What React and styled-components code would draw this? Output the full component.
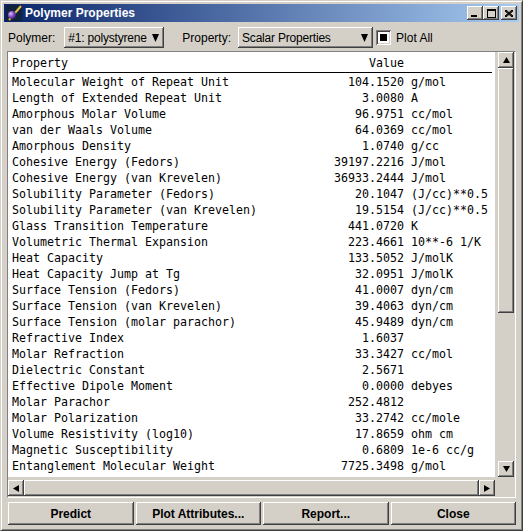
import React from "react";
import styled, { createGlobalStyle, css } from "styled-components";

const GlobalStyle = createGlobalStyle`
  html, body {
    margin: 0;
    padding: 0;
    background: #d4d0c8;
  }
  body {
    font-family: "Liberation Sans", Arial, sans-serif;
  }
`;

const raised = css`
  background: #d4d0c8;
  box-shadow: inset -1px -1px #404040, inset 1px 1px #ffffff,
    inset -2px -2px #808080, inset 2px 2px #d4d0c8;
`;

const sunken = css`
  box-shadow: inset 1px 1px #808080, inset -1px -1px #ffffff,
    inset 2px 2px #404040, inset -2px -2px #d4d0c8;
`;

const ROWS = [
  ["Molecular Weight of Repeat Unit", "104.1520", "g/mol"],
  ["Length of Extended Repeat Unit", "3.0080", "A"],
  ["Amorphous Molar Volume", "96.9751", "cc/mol"],
  ["van der Waals Volume", "64.0369", "cc/mol"],
  ["Amorphous Density", "1.0740", "g/cc"],
  ["Cohesive Energy (Fedors)", "39197.2216", "J/mol"],
  ["Cohesive Energy (van Krevelen)", "36933.2444", "J/mol"],
  ["Solubility Parameter (Fedors)", "20.1047", "(J/cc)**0.5"],
  ["Solubility Parameter (van Krevelen)", "19.5154", "(J/cc)**0.5"],
  ["Glass Transition Temperature", "441.0720", "K"],
  ["Volumetric Thermal Expansion", "223.4661", "10**-6 1/K"],
  ["Heat Capacity", "133.5052", "J/molK"],
  ["Heat Capacity Jump at Tg", "32.0951", "J/molK"],
  ["Surface Tension (Fedors)", "41.0007", "dyn/cm"],
  ["Surface Tension (van Krevelen)", "39.4063", "dyn/cm"],
  ["Surface Tension (molar parachor)", "45.9489", "dyn/cm"],
  ["Refractive Index", "1.6037", ""],
  ["Molar Refraction", "33.3427", "cc/mol"],
  ["Dielectric Constant", "2.5671", ""],
  ["Effective Dipole Moment", "0.0000", "debyes"],
  ["Molar Parachor", "252.4812", ""],
  ["Molar Polarization", "33.2742", "cc/mole"],
  ["Volume Resistivity (log10)", "17.8659", "ohm cm"],
  ["Magnetic Susceptibility", "0.6809", "1e-6 cc/g"],
  ["Entanglement Molecular Weight", "7725.3498", "g/mol"]
];

const Window = styled.div`
  width: 523px;
  height: 531px;
  box-sizing: border-box;
  border: 1px solid;
  border-color: #d4d0c8 #404040 #404040 #d4d0c8;
  box-shadow: inset 1px 1px #ffffff, inset -1px -1px #808080;
  padding: 3px;
  display: flex;
  flex-direction: column;
  background: #d4d0c8;
`;

const TitleBar = styled.div`
  height: 18px;
  flex: none;
  display: flex;
  align-items: center;
  padding: 0 2px;
  background: linear-gradient(to right, #0a246a, #a6caf0);
`;

const TitleText = styled.span`
  flex: 1;
  margin-left: 3px;
  color: #ffffff;
  font-weight: bold;
  font-size: 12px;
`;

const TitleButton = styled.div`
  ${raised};
  width: 16px;
  height: 14px;
  margin-left: ${(p) => (p.$gap ? 2 : 0)}px;
  display: flex;
  align-items: center;
  justify-content: center;
`;

const Content = styled.div`
  flex: 1;
  display: flex;
  flex-direction: column;
  padding: 5px 3px 2px 3px;
  min-height: 0;
`;

const Toolbar = styled.div`
  height: 21px;
  flex: none;
  display: flex;
  align-items: center;
  padding-left: 1px;
  margin-bottom: 3px;
  font-size: 12px;
  color: #000;
`;

const Label = styled.span`
  margin-left: ${(p) => p.$before || 0}px;
  margin-right: ${(p) => p.$after || 0}px;
  white-space: nowrap;
`;

const Combo = styled.div`
  ${raised};
  width: ${(p) => p.$w}px;
  height: 21px;
  box-sizing: border-box;
  display: flex;
  align-items: center;
  justify-content: space-between;
  padding: 0 5px 0 4px;
  white-space: nowrap;
  letter-spacing: -0.2px;
`;

const Check = styled.div`
  ${sunken};
  width: 15px;
  height: 15px;
  box-sizing: border-box;
  margin: 0 5px 0 3px;
  background: #ffffff;
  display: flex;
  align-items: center;
  justify-content: center;

  &::after {
    content: "";
    width: 7px;
    height: 7px;
    background: #000;
  }
`;

const Pane = styled.div`
  flex: 1;
  min-height: 0;
  box-sizing: border-box;
  border-top: 1px solid #808080;
  border-left: 1px solid #808080;
  border-right: 1px solid #ffffff;
  border-bottom: 1px solid #ffffff;
  padding: 0 1px 1px 0;
  display: grid;
  grid-template-columns: 1fr 16px;
  grid-template-rows: 1fr 16px;
  gap: 3px;
`;

const Viewport = styled.div`
  background: #ffffff;
  overflow: hidden;
  padding-top: 3px;
  font-family: "DejaVu Sans Mono", "Liberation Mono", monospace;
  font-size: 11.63px;
  color: #000;
`;

const HeaderRow = styled.div`
  display: flex;
  height: 17px;
  line-height: 17px;
  margin: 0 3px 0 2px;
  padding-left: 2px;
  border-bottom: 1px solid #000;
  white-space: pre;
`;

const Rows = styled.div`
  margin-top: 1px;
`;

const Row = styled.div`
  display: flex;
  height: 16px;
  line-height: 16px;
  padding-left: 4px;
  white-space: pre;
`;

const NameCell = styled.span`
  width: 300px;
  flex: none;
`;

const ValueCell = styled.span`
  width: 92px;
  flex: none;
  text-align: right;
`;

const UnitCell = styled.span`
  padding-left: 7px;
`;

const VScroll = styled.div`
  display: flex;
  flex-direction: column;
  background: #d4d0c8;
`;

const HScroll = styled.div`
  display: flex;
  background: #d4d0c8;
`;

const ScrollButton = styled.div`
  ${raised};
  width: 16px;
  height: 16px;
  flex: none;
  display: flex;
  align-items: center;
  justify-content: center;
`;

const Thumb = styled.div`
  ${raised};
  flex: ${(p) => (p.$size ? "none" : 1)};
  height: ${(p) => (p.$size ? `${p.$size}px` : "auto")};
`;

const Track = styled.div`
  flex: 1;
`;

const ButtonRow = styled.div`
  flex: none;
  height: 23px;
  margin-top: 4px;
  padding-left: 1px;
  display: grid;
  grid-template-columns: repeat(4, 1fr);
  gap: 2px;
`;

const ActionButton = styled.button`
  ${raised};
  border: none;
  padding: 0;
  font-family: "Liberation Sans", Arial, sans-serif;
  font-weight: bold;
  font-size: 12px;
  color: #000;
`;

const Arrow = ({ dir, w = 7, h = 7 }) => {
  const pts = {
    down: `0,0 ${w},0 ${w / 2},${h}`,
    up: `0,${h} ${w},${h} ${w / 2},0`,
    left: `${w},0 ${w},${h} 0,${h / 2}`,
    right: `0,0 0,${h} ${w},${h / 2}`
  }[dir];
  return (
    <svg width={w} height={h} viewBox={`0 0 ${w} ${h}`}>
      <polygon points={pts} fill="#000" />
    </svg>
  );
};

const AppIcon = () => (
  <svg width="16" height="16" viewBox="0 0 16 16">
    <defs>
      <radialGradient id="ball" cx="0.35" cy="0.35" r="0.7">
        <stop offset="0" stopColor="#e0c8ff" />
        <stop offset="0.45" stopColor="#8a5cd0" />
        <stop offset="1" stopColor="#3a1870" />
      </radialGradient>
    </defs>
    <rect width="16" height="16" fill="#10233c" />
    <line x1="3" y1="15" x2="15" y2="1" stroke="#e8c040" strokeWidth="2" />
    <circle cx="6" cy="10" r="4" fill="url(#ball)" />
  </svg>
);

const MinIcon = () => (
  <svg width="8" height="7" viewBox="0 0 8 7">
    <rect x="0" y="5" width="6" height="2" fill="#000" />
  </svg>
);

const MaxIcon = () => (
  <svg width="9" height="9" viewBox="0 0 9 9">
    <rect x="0.5" y="0.5" width="8" height="8" fill="none" stroke="#000" />
    <rect x="0" y="0" width="9" height="2" fill="#000" />
  </svg>
);

const CloseIcon = () => (
  <svg width="8" height="7" viewBox="0 0 8 7">
    <path d="M0 0 L8 7 M1 0 L8 6 M0 1 L7 7 M8 0 L0 7 M7 0 L0 6 M8 1 L1 7" stroke="#000" strokeWidth="1" />
  </svg>
);

export default function App() {
  return (
    <>
      <GlobalStyle />
      <Window>
        <TitleBar>
          <AppIcon />
          <TitleText>Polymer Properties</TitleText>
          <TitleButton>
            <MinIcon />
          </TitleButton>
          <TitleButton>
            <MaxIcon />
          </TitleButton>
          <TitleButton $gap>
            <CloseIcon />
          </TitleButton>
        </TitleBar>
        <Content>
          <Toolbar>
            <Label $after={9}>Polymer:</Label>
            <Combo $w={100}>
              <span>#1: polystyrene</span>
              <Arrow dir="down" w={7} h={8} />
            </Combo>
            <Label $before={18} $after={7}>
              Property:
            </Label>
            <Combo $w={135}>
              <span>Scalar Properties</span>
              <Arrow dir="down" w={7} h={8} />
            </Combo>
            <Check />
            <Label>Plot All</Label>
          </Toolbar>
          <Pane>
            <Viewport>
              <HeaderRow>
                <NameCell>Property</NameCell>
                <ValueCell>Value</ValueCell>
              </HeaderRow>
              <Rows>
                {ROWS.map(([name, value, unit]) => (
                  <Row key={name}>
                    <NameCell>{name}</NameCell>
                    <ValueCell>{value}</ValueCell>
                    <UnitCell>{unit}</UnitCell>
                  </Row>
                ))}
              </Rows>
            </Viewport>
            <VScroll>
              <ScrollButton>
                <Arrow dir="up" w={7} h={6} />
              </ScrollButton>
              <Thumb $size={245} />
              <Track />
              <ScrollButton>
                <Arrow dir="down" w={7} h={6} />
              </ScrollButton>
            </VScroll>
            <HScroll>
              <ScrollButton>
                <Arrow dir="left" w={6} h={7} />
              </ScrollButton>
              <Thumb />
              <ScrollButton>
                <Arrow dir="right" w={6} h={7} />
              </ScrollButton>
            </HScroll>
          </Pane>
          <ButtonRow>
            <ActionButton>Predict</ActionButton>
            <ActionButton>Plot Attributes...</ActionButton>
            <ActionButton>Report...</ActionButton>
            <ActionButton>Close</ActionButton>
          </ButtonRow>
        </Content>
      </Window>
    </>
  );
}
